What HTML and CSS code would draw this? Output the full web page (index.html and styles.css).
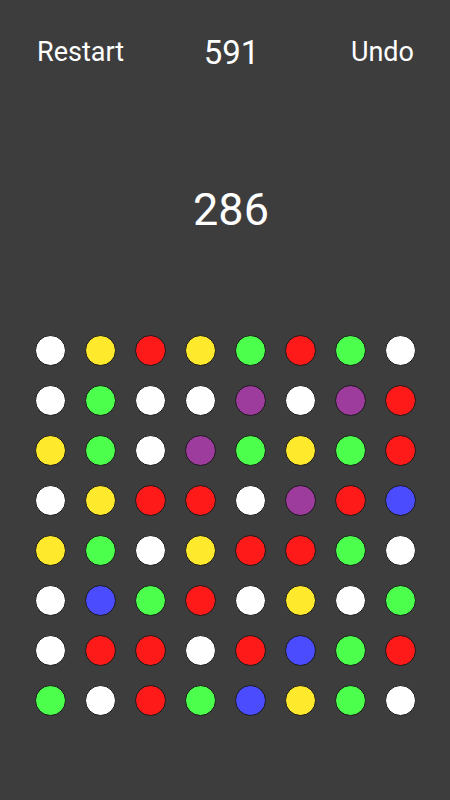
FILE: index.html
```html
<!DOCTYPE html>
<html lang="en">
<head>
    <meta charset="UTF-8">
    <meta name="viewport" content="width=device-width, initial-scale=1.0">
    <title>Dots</title>
    <link rel="stylesheet" href="styles.css">
</head>
<body>
    <div class="top-bar">
        <span class="top-button">Restart</span>
        <span class="best-score">591</span>
        <span class="top-button">Undo</span>
    </div>

    <div class="score">286</div>

    <div class="board">
        <span class="dot white"></span><span class="dot yellow"></span><span class="dot red"></span><span class="dot yellow"></span><span class="dot green"></span><span class="dot red"></span><span class="dot green"></span><span class="dot white"></span>
        <span class="dot white"></span><span class="dot green"></span><span class="dot white"></span><span class="dot white"></span><span class="dot purple"></span><span class="dot white"></span><span class="dot purple"></span><span class="dot red"></span>
        <span class="dot yellow"></span><span class="dot green"></span><span class="dot white"></span><span class="dot purple"></span><span class="dot green"></span><span class="dot yellow"></span><span class="dot green"></span><span class="dot red"></span>
        <span class="dot white"></span><span class="dot yellow"></span><span class="dot red"></span><span class="dot red"></span><span class="dot white"></span><span class="dot purple"></span><span class="dot red"></span><span class="dot blue"></span>
        <span class="dot yellow"></span><span class="dot green"></span><span class="dot white"></span><span class="dot yellow"></span><span class="dot red"></span><span class="dot red"></span><span class="dot green"></span><span class="dot white"></span>
        <span class="dot white"></span><span class="dot blue"></span><span class="dot green"></span><span class="dot red"></span><span class="dot white"></span><span class="dot yellow"></span><span class="dot white"></span><span class="dot green"></span>
        <span class="dot white"></span><span class="dot red"></span><span class="dot red"></span><span class="dot white"></span><span class="dot red"></span><span class="dot blue"></span><span class="dot green"></span><span class="dot red"></span>
        <span class="dot green"></span><span class="dot white"></span><span class="dot red"></span><span class="dot green"></span><span class="dot blue"></span><span class="dot yellow"></span><span class="dot green"></span><span class="dot white"></span>
    </div>
</body>
</html>
```

FILE: styles.css
```css
html, body {
    height: 100%;
}
body {
    margin: 0;
    background: #3d3d3d;
    color: #fff;
    font-family: Roboto, "Liberation Sans", sans-serif;
}
.top-bar {
    display: grid;
    grid-template-columns: 1fr auto 1fr;
    align-items: center;
    height: 104px;
    padding: 0 36px 0 37px;
}
.top-button {
    font-size: 27px;
}
.top-button:last-child {
    text-align: right;
}
.best-score {
    font-size: 33px;
    padding-left: 12px;
}
.score {
    height: 212px;
    line-height: 212px;
    text-align: center;
    font-size: 45px;
    padding-left: 12px;
}
.board {
    display: grid;
    grid-template-columns: repeat(8, 50px);
    grid-auto-rows: 50px;
    justify-content: center;
    justify-items: center;
    align-items: center;
    margin-top: 9px;
}
.dot {
    width: 29px;
    height: 29px;
    border-radius: 50%;
    border: 1px solid #1a1a1a;
}
.white { background: #fff; }
.yellow { background: #ffe92c; }
.red { background: #ff1a1a; }
.green { background: #4cff4c; }
.purple { background: #9e3c9e; }
.blue { background: #4c4cff; }
```
